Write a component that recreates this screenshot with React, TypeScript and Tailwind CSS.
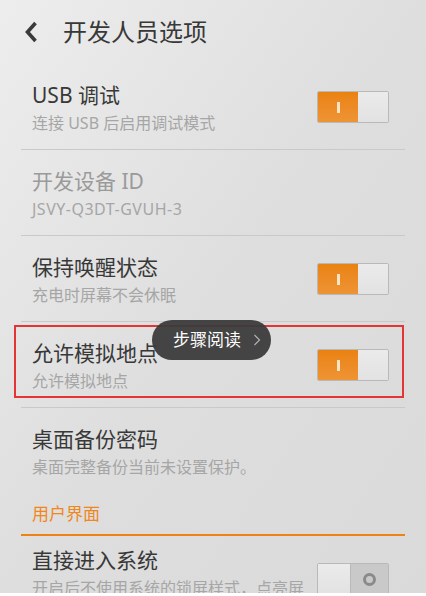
import { ReactNode } from 'react';

type RowProps = {
  title: string;
  subtitle: string;
  toggle?: 'on' | 'off';
  disabled?: boolean;
  divider?: boolean;
  overlay?: ReactNode;
};

function Toggle({ on }: { on: boolean }) {
  if (on) {
    return (
      <div className="flex h-[32px] w-[72px] overflow-hidden rounded-[2px] border border-[#b9b9b9]">
        <div className="flex w-[40px] items-center justify-center bg-gradient-to-b from-[#ea8210] to-[#ee9434]">
          <div className="h-[11px] w-[3px] bg-[#fbe3c6]" />
        </div>
        <div className="flex-1 bg-gradient-to-b from-[#ebebeb] to-[#e2e2e2]" />
      </div>
    );
  }
  return (
    <div className="flex h-[32px] w-[72px] overflow-hidden rounded-[2px] border border-[#b9b9b9]">
      <div className="w-[32px] bg-gradient-to-b from-[#ebebeb] to-[#e2e2e2]" />
      <div className="flex flex-1 items-center justify-center border-l border-[#b9b9b9] bg-[#c9c9c9]">
        <div className="h-[13px] w-[13px] rounded-full border-[3px] border-[#8a8a8a]" />
      </div>
    </div>
  );
}

function Row({ title, subtitle, toggle, disabled, divider = true, overlay }: RowProps) {
  return (
    <div className="relative">
      <div className="flex h-[85px] items-start pl-[32px] pr-[37px]">
        <div className="flex-1 pt-[17px]">
          <div
            className={`text-[21px] leading-[28px] ${disabled ? 'text-[#9a9a9a]' : 'text-[#383838]'}`}
          >
            {title}
          </div>
          <div
            className={`mt-[3px] text-[16px] leading-[22px] text-[#a6a6a6] ${disabled ? 'tracking-[0.5px]' : ''}`}
          >
            {subtitle}
          </div>
        </div>
        {toggle && (
          <div className="mt-[27px]">
            <Toggle on={toggle === 'on'} />
          </div>
        )}
      </div>
      {divider && <div className="mx-[21px] h-px bg-[#c9c9c9]" />}
      {overlay}
    </div>
  );
}

export default function App() {
  return (
    <div
      className="h-[596px] w-[426px] overflow-hidden bg-white"
      style={{ fontFamily: "'Noto Sans', 'Noto Sans CJK SC', sans-serif" }}
    >
      <div className="relative h-[593px] overflow-hidden bg-gradient-to-br from-[#ededed] via-[#dedede] to-[#dadada]">
        <header className="flex h-[64px] items-center">
          <svg className="ml-[24px] h-[22px] w-[14px]" viewBox="0 0 14 22">
            <path d="M11.5 2 L3.5 11 L11.5 20" fill="none" stroke="#3a3a3a" strokeWidth="3.6" />
          </svg>
          <h1 className="ml-[25px] text-[24px] leading-[32px] text-[#383838]">开发人员选项</h1>
        </header>

        <Row title="USB 调试" subtitle="连接 USB 后启用调试模式" toggle="on" />
        <Row title="开发设备 ID" subtitle="JSVY-Q3DT-GVUH-3" disabled />
        <Row title="保持唤醒状态" subtitle="充电时屏幕不会休眠" toggle="on" />
        <Row
          title="允许模拟地点"
          subtitle="允许模拟地点"
          toggle="on"
          overlay={
            <div className="pointer-events-none absolute left-[14px] top-[3px] h-[73px] w-[390px] border-2 border-[#e53434]" />
          }
        />
        <Row title="桌面备份密码" subtitle="桌面完整备份当前未设置保护。" divider={false} />

        <div className="flex h-[41px] items-end pl-[32px] pb-[8px]">
          <span className="text-[17px] leading-[24px] text-[#f0861c]">用户界面</span>
        </div>
        <div className="mx-[21px] h-[2px] bg-[#ee8214]" />

        <div className="flex items-start pl-[32px] pr-[37px]">
          <div className="flex-1 pt-[10px]">
            <div className="text-[21px] leading-[28px] text-[#383838]">直接进入系统</div>
            <div className="mt-[3px] text-[16px] leading-[22px] text-[#a6a6a6]">开启后不使用系统的锁屏样式，点亮屏</div>
          </div>
          <div className="mt-[27px]">
            <Toggle on={false} />
          </div>
        </div>

        <div className="absolute left-[152px] top-[320px] flex h-[40px] w-[119px] items-center rounded-full bg-[#3b3b3b]/95 pl-[21px]">
          <span className="text-[17px] leading-[22px] text-white">步骤阅读</span>
          <svg className="ml-[12px] h-[12px] w-[8px]" viewBox="0 0 8 12">
            <path d="M1.5 1 L6.5 6 L1.5 11" fill="none" stroke="#b0b0b0" strokeWidth="1.2" />
          </svg>
        </div>
      </div>
    </div>
  );
}
